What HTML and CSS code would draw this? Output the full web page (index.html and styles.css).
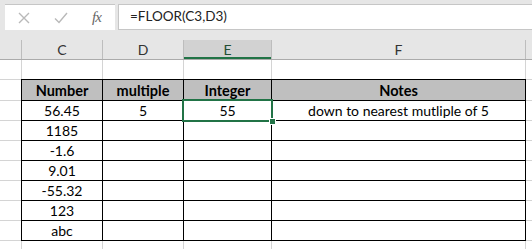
FILE: index.html
```html
<!DOCTYPE html>
<html lang="en">
<head>
    <meta charset="UTF-8">
    <title>FLOOR example</title>
    <link rel="stylesheet" href="styles.css">
</head>
<body>
    <div class="formula-bar">
        <div class="fx-buttons">
            <svg class="btn-icon" width="12" height="12" viewBox="0 0 12 12"><path d="M1 1 L11 11 M11 1 L1 11" stroke="#b9b9b9" stroke-width="1.4" fill="none"/></svg>
            <svg class="btn-icon" width="14" height="12" viewBox="0 0 14 12"><path d="M1 6.5 L5 10.5 L13 1" stroke="#b9b9b9" stroke-width="1.4" fill="none"/></svg>
            <span class="fx">fx</span>
        </div>
        <div class="formula-input">=FLOOR(C3,D3)</div>
    </div>

    <div class="col-heads">
        <div class="col-head"></div>
        <div class="col-head">C</div>
        <div class="col-head">D</div>
        <div class="col-head active">E</div>
        <div class="col-head">F</div>
        <div class="col-head"></div>
    </div>

    <div class="sheet">
        <div class="table">
            <div class="th">Number</div>
            <div class="th">multiple</div>
            <div class="th">Integer</div>
            <div class="th">Notes</div>

            <div class="td">56.45</div>
            <div class="td">5</div>
            <div class="td selected">55</div>
            <div class="td">down to nearest mutliple of 5</div>

            <div class="td">1185</div><div class="td"></div><div class="td"></div><div class="td"></div>
            <div class="td">-1.6</div><div class="td"></div><div class="td"></div><div class="td"></div>
            <div class="td">9.01</div><div class="td"></div><div class="td"></div><div class="td"></div>
            <div class="td">-55.32</div><div class="td"></div><div class="td"></div><div class="td"></div>
            <div class="td">123</div><div class="td"></div><div class="td"></div><div class="td"></div>
            <div class="td">abc</div><div class="td"></div><div class="td"></div><div class="td"></div>
        </div>

        <!-- plain cells around the table -->
        <div class="cell"></div><div class="cell"></div><div class="cell"></div><div class="cell"></div><div class="cell"></div><div class="cell"></div>
        <div class="cell"></div><div class="cell"></div>
        <div class="cell"></div><div class="cell"></div>
        <div class="cell"></div><div class="cell"></div>
        <div class="cell"></div><div class="cell"></div>
        <div class="cell"></div><div class="cell"></div>
        <div class="cell"></div><div class="cell"></div>
        <div class="cell"></div><div class="cell"></div>
        <div class="cell"></div><div class="cell"></div>
        <div class="cell"></div><div class="cell"></div><div class="cell"></div><div class="cell"></div><div class="cell"></div><div class="cell"></div>
    </div>
</body>
</html>
```

FILE: styles.css
```css
body {
    margin: 0;
    width: 532px;
    height: 249px;
    overflow: hidden;
    background: #e6e6e6;
    font-family: Lato, "Liberation Sans", sans-serif;
    font-size: 14px;
    color: #000;
}
.formula-bar {
    display: flex;
    gap: 3px;
    height: 40px;
    padding: 4px 0 0 5px;
    box-sizing: border-box;
}
.fx-buttons {
    width: 110px;
    height: 26px;
    box-sizing: border-box;
    background: #fff;
    border-top: 1px solid #c6c6c6;
    display: flex;
    align-items: center;
    padding-left: 13px;
}
.btn-icon {
    margin-right: 24px;
}
.fx {
    font-family: "Liberation Serif", serif;
    font-style: italic;
    font-size: 15px;
    color: #666;
    letter-spacing: -1px;
}
.formula-input {
    flex: 1;
    height: 26px;
    box-sizing: border-box;
    background: #fff;
    border: 1px solid #c6c6c6;
    border-right: none;
    padding-left: 11px;
    line-height: 23px;
    font-size: 13.5px;
    color: #222;
}
.col-heads {
    display: grid;
    grid-template-columns: 21px 80px 80px 87px 253px 6px;
    grid-template-rows: 19px;
    gap: 1px;
    background: #bdbdbd;
    border-bottom: 1px solid #ababab;
}
.col-head {
    background: #e6e6e6;
    text-align: center;
    font-size: 14px;
    line-height: 19px;
    color: #333;
}
.col-head.active {
    background: #d2d2d2;
    color: #1f4e33;
    box-shadow: inset 0 -2px 0 #217346;
}
.sheet {
    display: grid;
    grid-template-columns: 21px 80px 80px 87px 253px 6px;
    grid-template-rows: 19px 20px repeat(7, 19px) 8px;
    gap: 1px;
    background: #d4d4d4;
}
.cell {
    background: #fff;
}
.table {
    grid-column: 2 / 6;
    grid-row: 2 / 10;
    margin: -1px;
    display: grid;
    grid-template-columns: 80px 80px 87px 253px;
    grid-template-rows: 20px repeat(7, 19px);
    gap: 1px;
    padding: 1px;
    background: #000;
}
.th, .td {
    background: #fff;
    text-align: center;
    line-height: 20px;
    white-space: nowrap;
}
.th {
    background: #bfbfbf;
    font-weight: bold;
    font-size: 14.5px;
    line-height: 21px;
}
.selected {
    position: relative;
}
.selected::before {
    content: "";
    position: absolute;
    top: -2px;
    left: -2px;
    right: -2px;
    bottom: -2px;
    border: 2px solid #217346;
}
.selected::after {
    content: "";
    position: absolute;
    right: -5px;
    bottom: -5px;
    width: 5px;
    height: 5px;
    background: #217346;
    border: 1px solid #fff;
}
```
